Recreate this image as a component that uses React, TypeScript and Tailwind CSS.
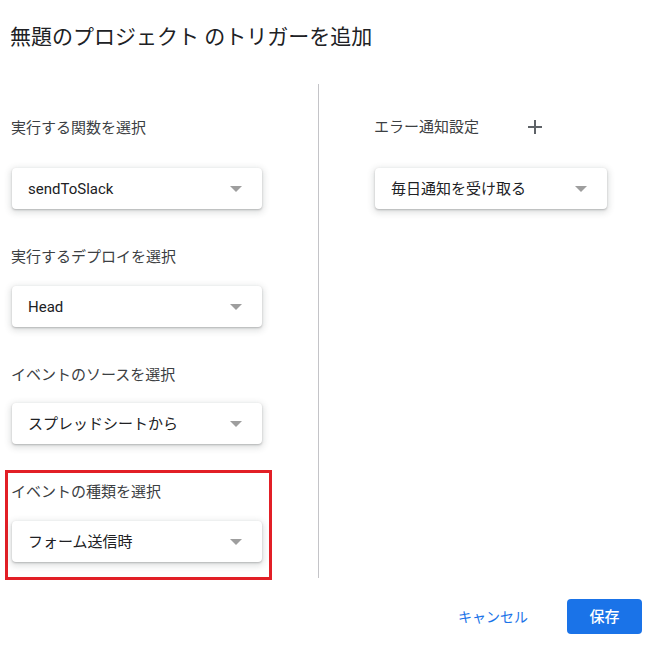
import React from 'react';

const font = { fontFamily: 'Roboto, "Noto Sans CJK JP", sans-serif' };

function Select({ value, width }: { value: string; width: string }) {
  return (
    <div
      className={`${width} h-[41px] bg-white rounded-[4px] flex items-center justify-between pl-4 pr-[20px] shadow-[0_1px_2px_0_rgba(60,64,67,0.3),0_2px_6px_2px_rgba(60,64,67,0.15)]`}
    >
      <span className="text-[15px] leading-5 text-[#202124]">{value}</span>
      <span className="w-0 h-0 border-l-[6px] border-r-[6px] border-t-[6px] border-l-transparent border-r-transparent border-t-[#9e9e9e]" />
    </div>
  );
}

function Label({ children }: { children: React.ReactNode }) {
  return <div className="text-[15px] leading-5 text-[#3c4043]">{children}</div>;
}

export default function App() {
  return (
    <div className="w-[655px] h-[649px] bg-white overflow-hidden" style={font}>
      {/* タイトル */}
      <div className="pl-[10px] pt-[23px] text-[21px] leading-7 text-[#202124]">
        無題のプロジェクト のトリガーを追加
      </div>

      <div className="flex mt-[33px]">
        {/* 左カラム */}
        <div className="w-[319px] h-[494px] border-r border-[#c4c4c8] pl-[11px]">
          <div className="mt-[34px]">
            <Label>実行する関数を選択</Label>
          </div>
          <div className="mt-[30px] ml-[1px]">
            <Select value="sendToSlack" width="w-[250px]" />
          </div>

          <div className="mt-[38px]">
            <Label>実行するデプロイを選択</Label>
          </div>
          <div className="mt-[19px] ml-[1px]">
            <Select value="Head" width="w-[250px]" />
          </div>

          <div className="mt-[38px]">
            <Label>イベントのソースを選択</Label>
          </div>
          <div className="mt-[18px] ml-[1px]">
            <Select value="スプレッドシートから" width="w-[250px]" />
          </div>

          <div className="mt-[26px] -ml-[6px] w-[267px] border-[3px] border-[#e21f26] pl-[3px] pt-[9px] pb-[15px]">
            <Label>イベントの種類を選択</Label>
            <div className="mt-[19px] ml-[1px]">
              <Select value="フォーム送信時" width="w-[250px]" />
            </div>
          </div>
        </div>

        {/* 右カラム */}
        <div className="pl-[55px]">
          <div className="mt-[33px] flex items-center">
            <Label>エラー通知設定</Label>
            <svg className="ml-[49px]" width="14" height="14" viewBox="0 0 14 14">
              <path d="M7 0v14M0 7h14" stroke="#5f6368" strokeWidth="2" />
            </svg>
          </div>
          <div className="mt-[31px] ml-[1px]">
            <Select value="毎日通知を受け取る" width="w-[232px]" />
          </div>
        </div>
      </div>

      {/* ボタン */}
      <div className="flex justify-end items-center mt-[21px] pr-[13px]">
        <button className="text-[14px] leading-5 text-[#1a73e8] mr-[39px]">キャンセル</button>
        <button className="w-[75px] h-[35px] rounded-[4px] bg-[#1a73e8] text-white text-[15px] font-medium leading-5">
          保存
        </button>
      </div>
    </div>
  );
}
